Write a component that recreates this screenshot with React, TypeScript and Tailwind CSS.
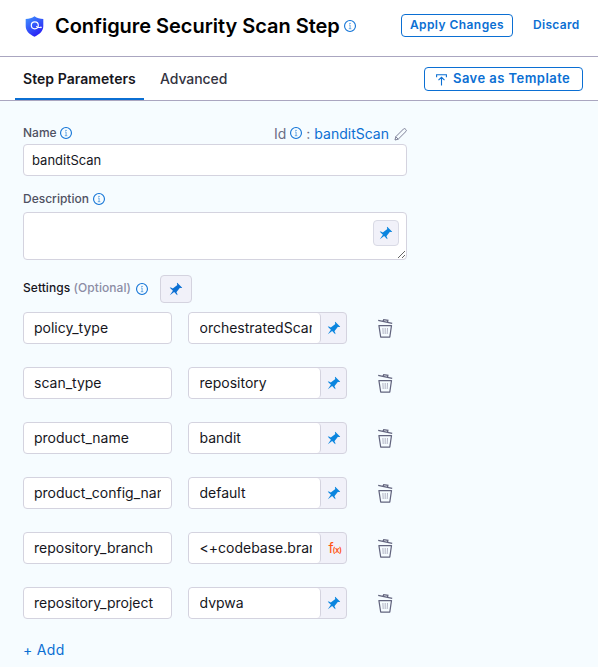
const SETTINGS = [
  { key: 'policy_type', value: 'orchestratedScan' },
  { key: 'scan_type', value: 'repository' },
  { key: 'product_name', value: 'bandit' },
  { key: 'product_config_name', value: 'default' },
  { key: 'repository_branch', value: '<+codebase.branch>', expression: true },
  { key: 'repository_project', value: 'dvpwa' },
];

function Shield() {
  return (
    <svg className="h-[21px] w-[19px] shrink-0" viewBox="0 0 19 21">
      <defs>
        <linearGradient id="shield" x1="0" y1="0" x2="0.6" y2="1">
          <stop offset="0" stopColor="#4096ff" />
          <stop offset="1" stopColor="#2a20f5" />
        </linearGradient>
      </defs>
      <path d="M9.5.3C12 2 15 2.900 18.300 3v7c0 4.800-3.200 8-8.800 10.800C3.900 18 .7 14.800.7 10V3C4 2.900 7 2 9.500.3z" fill="url(#shield)" />
      <circle cx="9.800" cy="9.300" r="3.500" fill="none" stroke="#fff" strokeWidth="1.200" />
      <path d="M11.300 10.200l1.500 1.300h2.500" fill="none" stroke="#fff" strokeWidth="1.100" />
      <circle cx="15.900" cy="11.300" r=".9" fill="#fff" />
    </svg>
  );
}

function Info() {
  return (
    <svg className="h-3 w-3 shrink-0" viewBox="0 0 12 12">
      <circle cx="6" cy="6" r="5.450" fill="none" stroke="#0f72d6" strokeWidth="1.100" />
      <path d="M5.100 5h1v3.600M4.800 8.700h2.500" fill="none" stroke="#5b9fe0" strokeWidth=".9" />
      <rect x="5.400" y="2.900" width="1.200" height="1.100" fill="#3c8ddc" />
    </svg>
  );
}

function Pin() {
  return (
    <svg className="h-[14px] w-[14px]" viewBox="0 0 16 16" fill="currentColor">
      <path d="M9.410.920c-.510.510-.410 1.500.150 2.560L4.340 7.540C2.800 6.480 1.450 6.050.920 6.580l3.540 3.540-3.540 4.950 4.950-3.540 3.540 3.540c.530-.530.100-1.880-.960-3.420l4.060-5.220c1.060.560 2.040.660 2.550.150L9.410.920z" />
    </svg>
  );
}

function Pencil() {
  return (
    <svg className="h-[13px] w-[13px]" viewBox="0 0 13 13" fill="none" stroke="#777991" strokeWidth=".95" strokeLinejoin="round">
      <path d="M1 12l.8-3.300L9.600.9q.8-.7 1.700.1l.7.700q.8.800 0 1.700L4.200 11.200zM1.800 8.700l2.400 2.500" />
    </svg>
  );
}

function Trash() {
  return (
    <svg className="h-5 w-4" viewBox="0 0 16 20" fill="none" stroke="#62647e" strokeWidth="1.250">
      <path d="M1.200 2.300l14 3.100M6.200 3.200l.5-1.600 4.200.7-.4 1.900" />
      <path d="M1.900 7.500h12.600l-1.700 11.500H3.700z" strokeLinejoin="round" />
      <path d="M5.900 10l.3 6M8.200 10v6M10.500 10l-.3 6" stroke="#a9abbd" strokeWidth=".9" />
    </svg>
  );
}

function UploadIcon() {
  return (
    <svg className="mt-px h-3 w-[11px]" viewBox="0 0 11 12" fill="none" stroke="#0b6fd3" strokeWidth="1.100">
      <path d="M.6 3.300V.7h9.800v2.600M5.500 11.500V3.500M2.500 6.200l3-2.900 3 2.900" />
    </svg>
  );
}

const field = 'h-8 rounded border border-[#d4d3df] bg-white text-[#16161d] outline-none';

export default function App() {
  return (
    <div className="flex h-[667px] w-[598px] flex-col overflow-hidden bg-[#f6fcff] font-['Inter',sans-serif]">
      <header className="flex h-[57px] shrink-0 items-start border-b border-[#aaa6c0] bg-white pl-[25px]">
        <div className="mt-[15px] flex h-[22px] items-center">
          <Shield />
          <h1 className="ml-[11px] w-[285px] whitespace-nowrap text-[20px] leading-[22px] font-semibold tracking-[-0.03px] text-black">Configure Security Scan Step</h1>
          <span className="ml-1"><Info /></span>
        </div>
        <button className="mt-[14px] ml-[45px] h-[23px] w-[112px] rounded border border-[#0b6fd3] pb-px text-[12px] leading-5 font-semibold tracking-[0.43px] whitespace-nowrap text-[#0b6fd3]">Apply Changes</button>
        <button className="mt-[14px] ml-[20px] h-[23px] pb-[2px] text-[12px] font-semibold tracking-[0.3px] text-[#0b6fd3]">Discard</button>
      </header>

      <nav className="flex h-11 shrink-0 border-b border-[#aaa6c0] bg-white pr-[15px] pl-[15px]">
        <div className="h-[43px] w-[129px] border-b-2 border-[#0b6fd3] pl-2 text-sm leading-[43px] font-semibold tracking-[0.05px] whitespace-nowrap text-[#16161d]">Step Parameters</div>
        <div className="ml-4 text-sm leading-[43px] font-medium tracking-[-0.08px] text-[#33333f]">Advanced</div>
        <button className="mt-[10px] ml-auto flex h-6 w-[159px] items-center rounded border border-[#0b6fd3] pl-[11px] text-[13px] font-semibold tracking-[0.45px] whitespace-nowrap text-[#0b6fd3]">
          <UploadIcon />
          <span className="ml-[6px]">Save as Template</span>
        </button>
      </nav>

      <main className="flex w-[407px] flex-col pl-[23px]">
        <div className="mt-[22px] mb-px flex h-5 items-center">
          <label className="mr-[3px] text-xs font-medium text-[#4f5162]">Name</label>
          <Info />
          <div className="ml-auto flex items-center text-sm whitespace-nowrap text-[#6b6d85]">
            <span className="mt-[2px] mr-1">Id</span>
            <Info />
            <span className="mt-[2px] mr-1 ml-1">:</span>
            <span className="mt-[2px] text-[#0b6fd3]">banditScan</span>
            <span className="mt-[2px] ml-[5px]"><Pencil /></span>
          </div>
        </div>
        <input className={field + ' w-full px-2 text-[13px]'} defaultValue="banditScan" />

        <div className="mt-[13px] flex h-5 items-center gap-1">
          <label className="text-xs font-medium text-[#4f5162]">Description</label>
          <Info />
        </div>
        <div className="relative mt-[3px] h-12">
          <textarea className="block h-12 w-full resize rounded border border-[#d4d3df] bg-white outline-none" />
          <button className="absolute top-2 right-2 flex h-[26px] w-[26px] items-center justify-center rounded border border-[#d9dae5] bg-[#f1f1f9] text-[#0a85df]"><Pin /></button>
        </div>

        <div className="mt-[15px] flex h-7 items-center">
          <span className="mb-[2px] text-xs font-medium tracking-[0.06px] text-[#16161d]">Settings <span className="text-[#8c8da5]">(Optional)</span></span>
          <span className="ml-[5px]"><Info /></span>
          <button className="ml-3 flex h-7 w-8 items-center justify-center rounded border border-[#d4d3df] bg-[#f1f1f9] text-[#0b6fd3]"><Pin /></button>
        </div>

        <div className="mt-[9px] flex flex-col gap-[23px]">
          {SETTINGS.map((s) => (
            <div key={s.key} className="flex h-8">
              <input className={field + ' w-[149px] px-[10px] pb-[2px] text-sm'} defaultValue={s.key} />
              <div className="ml-4 flex h-8 w-[159px] rounded border border-[#d4d3df] bg-[#f1f1f9]">
                <input className="h-[30px] w-[132px] rounded border-r border-[#d4d3df] bg-white pr-2 pb-[2px] pl-[10.5px] text-sm text-[#16161d] outline-none" defaultValue={s.value} />
                <span className="flex flex-1 items-center justify-center text-[#0a85df]">
                  {s.expression ? (
                    <span className="ml-[3px] flex items-baseline pb-px text-sm leading-none text-[#ff5310]">f<span className="-ml-px text-[8px] font-semibold tracking-[-0.5px]">(x)</span></span>
                  ) : (
                    <Pin />
                  )}
                </span>
              </div>
              <button className="mt-[6px] ml-[30px] h-5"><Trash /></button>
            </div>
          ))}
        </div>
        <button className="mt-[21px] h-5 self-start text-sm tracking-[0.3px] text-[#0b6fd3]">+ Add</button>
      </main>
    </div>
  );
}
